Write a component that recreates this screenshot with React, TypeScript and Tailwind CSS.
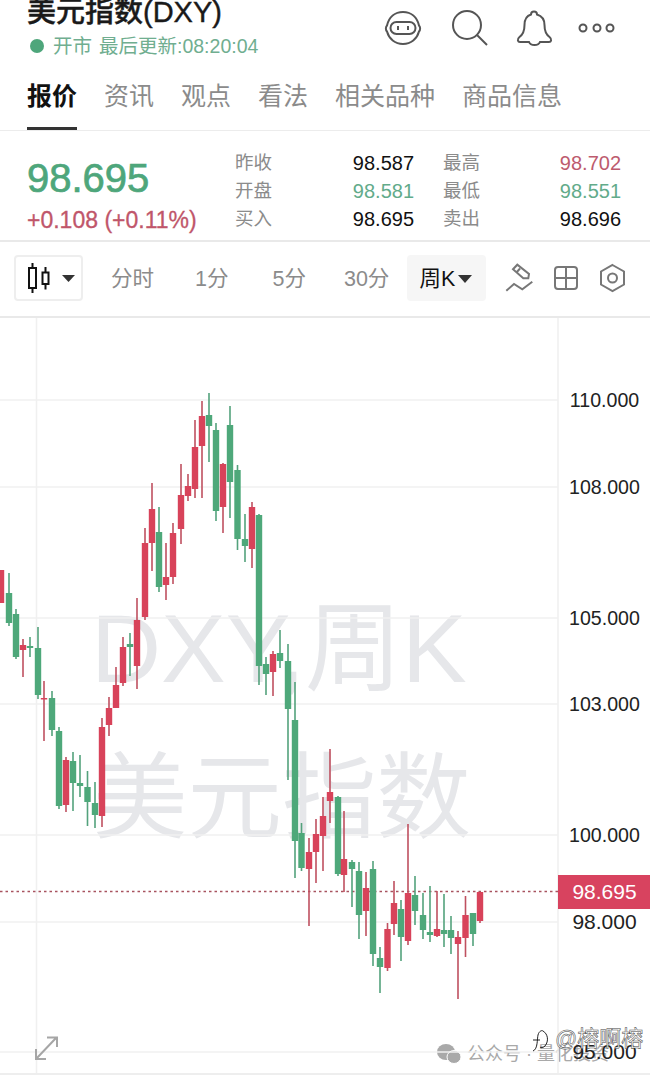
import React from "react";

// x, wick top, wick bottom, body top, body bottom, up (red) or down (green), in page pixels
type Candle = [number, number, number, number, number, "r" | "g"];

const candles: Candle[] = [
  [1, 570, 603, 570, 603, "r"],
  [9, 573, 626, 593, 623, "g"],
  [16, 609, 659, 614, 657, "g"],
  [23, 639, 677, 645, 650, "r"],
  [30, 637, 657, 646, 648, "g"],
  [38, 627, 699, 648, 695, "g"],
  [44, 681, 741, 698, 699, "r"],
  [52, 691, 736, 698, 730, "g"],
  [59, 727, 809, 731, 806, "g"],
  [66, 757, 812, 760, 805, "r"],
  [73, 752, 811, 761, 783, "g"],
  [80, 755, 797, 783, 786, "g"],
  [87.5, 771, 826, 787, 802, "g"],
  [95, 782, 828, 803, 815, "g"],
  [102, 718, 827, 727, 816, "r"],
  [109, 697, 736, 708, 725, "r"],
  [116, 667, 708, 685, 708, "r"],
  [123, 637, 686, 647, 683, "r"],
  [130, 633, 676, 644, 647, "g"],
  [137, 598, 689, 620, 666, "r"],
  [145, 528, 620, 543, 617, "r"],
  [152, 483, 571, 509, 543, "r"],
  [159, 507, 592, 532, 587, "g"],
  [166, 543, 600, 577, 585, "r"],
  [173, 523, 584, 533, 577, "r"],
  [181, 464, 544, 495, 529, "r"],
  [188, 474, 501, 486, 496, "r"],
  [195, 420, 498, 447, 489, "r"],
  [202, 401, 498, 416, 446, "r"],
  [209, 393, 462, 415, 426, "g"],
  [216, 423, 521, 430, 511, "g"],
  [223, 463, 533, 464, 507, "r"],
  [230, 406, 518, 425, 482, "g"],
  [237.5, 465, 550, 470, 539, "g"],
  [245, 514, 562, 539, 546, "g"],
  [252, 502, 568, 507, 549, "r"],
  [259, 514, 685, 515, 666, "g"],
  [266, 657, 695, 664, 674, "g"],
  [273, 651, 696, 654, 672, "r"],
  [280, 630, 668, 653, 661, "g"],
  [288, 644, 780, 661, 709, "g"],
  [295, 682, 878, 720, 841, "g"],
  [301.5, 823, 871, 833, 868, "g"],
  [309, 838, 926, 852, 869, "r"],
  [316, 819, 883, 834, 852, "r"],
  [323, 797, 871, 816, 836, "r"],
  [330, 749, 823, 792, 801, "r"],
  [338, 796, 876, 797, 874, "g"],
  [344, 811, 892, 859, 875, "r"],
  [352, 860, 907, 862, 869, "g"],
  [359, 862, 939, 871, 915, "g"],
  [366, 872, 936, 888, 911, "r"],
  [373, 861, 966, 869, 954, "g"],
  [380, 947, 993, 958, 967, "g"],
  [387.5, 923, 971, 929, 968, "r"],
  [394, 881, 935, 903, 924, "r"],
  [401, 900, 961, 909, 937, "g"],
  [408, 824, 945, 893, 941, "r"],
  [415, 876, 925, 895, 911, "g"],
  [423, 893, 939, 915, 930, "g"],
  [430, 886, 942, 932, 935, "g"],
  [437, 891, 937, 929, 936, "r"],
  [444, 894, 947, 930, 934, "g"],
  [451, 916, 954, 930, 938, "g"],
  [458, 931, 999, 937, 944, "r"],
  [465.5, 896, 957, 915, 938, "r"],
  [473, 913, 946, 913, 934, "g"],
  [480, 892, 923, 892, 921, "r"],
];

const axis = [
  { y: 400, label: "110.000" },
  { y: 487, label: "108.000" },
  { y: 618, label: "105.000" },
  { y: 704, label: "103.000" },
  { y: 835, label: "100.000" },
  { y: 922, label: "98.000" },
  { y: 1052, label: "95.000" },
];

const tabs = ["资讯", "观点", "看法", "相关品种", "商品信息"];

const quotes = [
  [
    { k: "昨收", v: "98.587", c: "text-[#111111]" },
    { k: "最高", v: "98.702", c: "text-[#bd5b6e]" },
  ],
  [
    { k: "开盘", v: "98.581", c: "text-[#62ab8a]" },
    { k: "最低", v: "98.551", c: "text-[#62ab8a]" },
  ],
  [
    { k: "买入", v: "98.695", c: "text-[#111111]" },
    { k: "卖出", v: "98.696", c: "text-[#111111]" },
  ],
];

const font = "font-['Liberation_Sans','Noto_Sans_CJK_SC',sans-serif]";

function HeaderIcons() {
  return (
    <div className="ml-auto mr-[34px] mt-[9px] flex items-start gap-7 text-[#555555]">
      <svg width="38" height="38" viewBox="0 0 38 38" fill="none" stroke="currentColor" strokeWidth="2">
        <path d="M3 16.5 C5 8 11 3 19 3 C27 3 33 8 35 16.5 C36.5 18 36.5 21 35 22.5 C33 30 27 35 19 35 C11 35 5 30 3 22.5 C1.5 21 1.5 18 3 16.5 Z" />
        <rect x="6.5" y="13" width="25" height="12" rx="6" />
        <path d="M14 17 V21 M24 17 V21" />
      </svg>
      <svg width="38" height="38" viewBox="0 0 38 38" fill="none" stroke="currentColor" strokeWidth="2">
        <circle cx="17" cy="16" r="14" />
        <path d="M27 26 L37 36" />
      </svg>
      <svg width="38" height="38" viewBox="0 0 38 38" fill="none" stroke="currentColor" strokeWidth="2">
        <path d="M15 5.5 C15 1.5 21 1.5 21 5.5 C26 7 28.5 11 28.5 16 C28.5 22 30 25.5 33.5 28 C36.5 30.5 35 33 33 33 L24 33 C22.5 37 14.5 37 13 33 L4 33 C2 33 0.5 30.5 3.5 28 C7 25.5 8.5 22 8.5 16 C8.5 11 10 7 15 5.5 Z" />
      </svg>
      <svg className="-ml-1" width="38" height="38" viewBox="0 0 38 38" fill="none" stroke="currentColor" strokeWidth="2">
        <circle cx="5" cy="19" r="3.5" />
        <circle cx="19" cy="19" r="3.5" />
        <circle cx="32" cy="19" r="3.5" />
      </svg>
    </div>
  );
}

function Toolbar() {
  return (
    <div className="flex h-[76px] items-center border-b-2 border-[#e9e9e9] pb-[2px] text-[21.5px] leading-[34px] text-[#8b8b8b]">
      <div className="ml-[14px] flex h-[46px] w-[69px] shrink-0 items-center rounded border-2 border-[#eeeeee]">
        <svg className="ml-[2px]" width="62" height="36" viewBox="0 0 62 36" fill="none" stroke="#111111" strokeWidth="2">
          <path d="M14.5 3 V33 M27.5 7 V29.5" />
          <rect x="11" y="8" width="7" height="20" fill="#ffffff" />
          <rect x="24.5" y="12.5" width="6" height="11.5" fill="#ffffff" />
          <path d="M44 15 H57 L50.5 22 Z" fill="#333333" stroke="none" />
        </svg>
      </div>
      <span className="ml-7 pt-[2px]">分时</span>
      <span className="ml-[41px] pt-[2px]">1分</span>
      <span className="ml-[44px] pt-[2px]">5分</span>
      <span className="ml-[38px] pt-[2px]">30分</span>
      <div className="ml-[18px] flex h-[46px] w-[79px] shrink-0 items-center rounded bg-[#f6f6f6] pl-3 pt-[2px] text-[#111111]">
        周K
        <svg className="ml-[3px]" width="14" height="8" viewBox="0 0 14 8">
          <path d="M0 0 H14 L7 8 Z" fill="#333333" />
        </svg>
      </div>
      <svg className="ml-[19px]" width="28" height="32" viewBox="0 0 28 32" fill="none" stroke="#777777" strokeWidth="2">
        <path d="M8 7.3 L12.3 2.7 L24 12 L23.3 16.3 L18.3 16.3 Z M11 11 L15 6.5" />
        <path d="M1.3 28.7 L9 22 L17.3 27.3 L27.3 19.7" />
      </svg>
      <svg className="ml-[19px]" width="28" height="28" viewBox="0 0 28 28" fill="none" stroke="#777777" strokeWidth="2">
        <rect x="3" y="3" width="22" height="22" rx="3" />
        <path d="M14 3 V25 M3 14 H25" />
      </svg>
      <svg className="ml-[18px]" width="28" height="30" viewBox="0 0 28 30" fill="none" stroke="#777777" strokeWidth="2">
        <path d="M14.5 2 L26 8.5 V21.5 L14.5 28 L3 21.5 V8.5 Z" />
        <circle cx="14.5" cy="15" r="4.5" />
      </svg>
    </div>
  );
}

function Chart() {
  return (
    <div className="relative h-[757px] overflow-hidden border-b-2 border-[#eeeeee]">
      <div className="absolute left-[91px] top-[275px] whitespace-nowrap text-[97px] leading-[112px] text-[#e6e7ea]">DXY,周K</div>
      <div className="absolute left-[93px] top-[424px] whitespace-nowrap text-[94.5px] leading-[112px] text-[#e6e7ea]">美元指数</div>

      {/* article watermark stamped over the screenshot */}
      <div className="absolute left-[437px] top-[724px] flex items-center text-[18px] leading-6 text-[#a9a9a9]">
        <svg width="24" height="20" viewBox="0 0 24 20" fill="#a9a9a9">
          <ellipse cx="9" cy="8" rx="9" ry="8" />
          <ellipse cx="17" cy="13" rx="7" ry="6.5" stroke="#ffffff" strokeWidth="1" />
        </svg>
        <span className="ml-[6px] whitespace-nowrap">公众号 · 量化投资</span>
      </div>

      <svg className="absolute inset-0" width="650" height="757" viewBox="0 318 650 757">
        <g stroke="#f0f0f0" strokeWidth="1.5">
          <path d="M36.5 318 V1075 M558 318 V1075" />
          {axis.map((a) => (
            <path key={a.y} d={`M0 ${a.y} H558`} />
          ))}
        </g>
        <path d="M0 891.5 H558" stroke="#a8535f" strokeWidth="1.5" strokeDasharray="2.5 3" />
        {candles.map(([x, top, bottom, bodyTop, bodyBottom, side]) => (
          <g key={x}>
            <path
              d={`M${x} ${top} V${bottom}`}
              stroke={side === "r" ? "#bf5060" : "#53a27c"}
              strokeWidth="1.6"
            />
            <rect
              x={x - 3.2}
              y={bodyTop}
              width="6.4"
              height={Math.max(bodyBottom - bodyTop, 1.5)}
              fill={side === "r" ? "#d8435a" : "#4ea87a"}
            />
          </g>
        ))}
        {axis.map((a) => (
          <text
            key={a.label}
            x="604.5"
            y={a.y + 7}
            textAnchor="middle"
            fontSize={a.label.length === 6 ? 21 : 19.6}
            fill="#222222"
          >
            {a.label}
          </text>
        ))}
        <rect x="558" y="875" width="92" height="34" fill="#d8435f" />
        <text x="604.5" y="899" textAnchor="middle" fontSize="21" fill="#ffffff">
          98.695
        </text>
        <path d="M36 1059 L56 1038 M47 1037.5 H57 V1047 M36 1049 V1059 H46" fill="none" stroke="#a6a6a6" strokeWidth="2" />
      </svg>

      <svg className="absolute left-[530px] top-[711px]" width="20" height="24" viewBox="0 0 20 24" fill="none" stroke="#222222" strokeWidth="1">
        <path d="M3 22 C8 20 7 10 8 6 C9 2 12 1 13 2 M3 11 H10 M13 2 C18 5 19 12 15 17 C13 19 11 19 10 18" />
      </svg>
      <div className="absolute left-[555px] top-[707px] whitespace-nowrap text-[22px] leading-7 text-white [-webkit-text-stroke:0.5px_#444444]">@榕啊榕</div>
    </div>
  );
}

export default function App() {
  return (
    <div className={`h-[1080px] w-[650px] overflow-hidden bg-white ${font}`}>
      <div className="flex h-16">
        <div className="pl-[27px]">
          <div className="h-6 whitespace-nowrap text-[29px] font-medium leading-6 text-[#1a1a1a] [-webkit-text-stroke:0.4px_#1a1a1a]">美元指数(DXY)</div>
          <div className="mt-[10px] flex h-6 items-center whitespace-nowrap text-[19.5px] leading-6 text-[#70ae90]">
            <span className="ml-[3px] h-[14px] w-[14px] rounded-full bg-[#4ea67b]" />
            <span className="ml-[9px]">开市</span>
            <span className="ml-[7px]">最后更新:08:20:04</span>
          </div>
        </div>
        <HeaderIcons />
      </div>

      <div className="flex h-[67px] gap-[27px] border-b border-[#ececec] pl-[27px] text-[25px] leading-[65px] text-[#8b8b8b]">
        <div className="h-[66px] border-b-[3px] border-[#333333] font-bold text-[#111111]">报价</div>
        {tabs.map((t) => (
          <div key={t}>{t}</div>
        ))}
      </div>

      <div className="flex h-[111px] border-b-2 border-[#e9e9e9]">
        <div className="w-[235px] shrink-0 pl-[27px] pt-[23px]">
          <div className="text-[40px] font-medium leading-[48px] text-[#4ea67b] [-webkit-text-stroke:0.7px_#4ea67b]">98.695</div>
          <div className="whitespace-nowrap text-[23px] leading-9 text-[#c0566a] [-webkit-text-stroke:0.3px_#c0566a]">+0.108 (+0.11%)</div>
        </div>
        <div className="grid grid-cols-[179px_178px] auto-rows-[28px] gap-x-[29px] pt-[18px] text-[20px] leading-7">
          {quotes.flat().map((q) => (
            <div key={q.k} className="flex h-7 items-center justify-between">
              <span className="text-[18.5px] text-[#8b8b8b]">{q.k}</span>
              <span className={q.c}>{q.v}</span>
            </div>
          ))}
        </div>
      </div>

      <Toolbar />
      <Chart />
    </div>
  );
}
